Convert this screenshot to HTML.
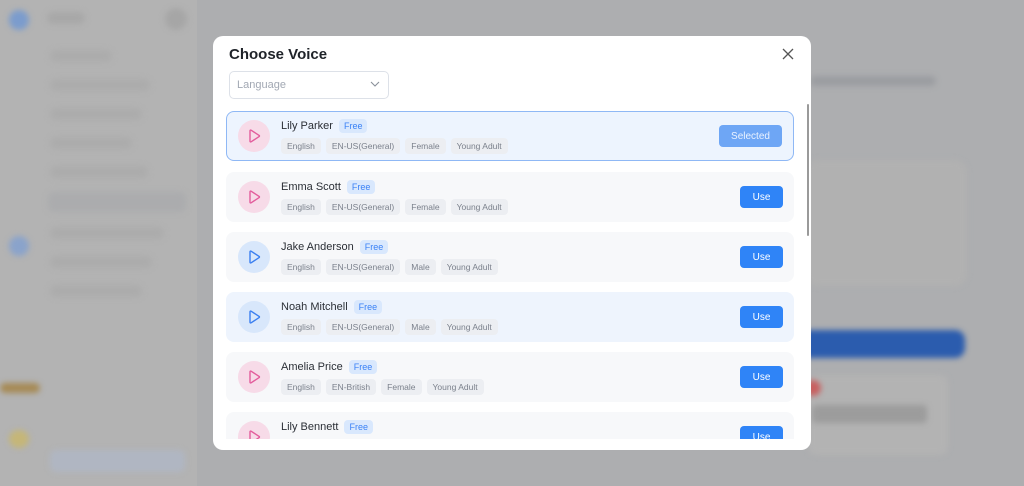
<!DOCTYPE html>
<html><head><meta charset="utf-8"><style>
*{box-sizing:border-box;margin:0;padding:0}
body{width:1024px;height:486px;overflow:hidden;background:#adaeb0;font-family:"Liberation Sans",sans-serif;position:relative}
.bg{position:absolute;filter:blur(3px)}
.modal{position:absolute;left:213px;top:36px;width:598px;height:414px;background:#fff;border-radius:10px;overflow:hidden}
h1{position:absolute;left:16px;top:10px;font-size:15px;font-weight:bold;color:#1f2329}
.close{position:absolute;left:568px;top:11px}
.sel{position:absolute;left:16px;top:35px;width:160px;height:28px;border:1px solid #dde1e8;border-radius:5px;font-size:11px;color:#a2a8b3;padding:7px 7px}
.sel svg{position:absolute;right:8px;top:9px}
.list{position:absolute;left:13px;top:75px;width:568px;height:328px;overflow:hidden}
.row{position:absolute;left:0;width:568px;height:50px;border-radius:8px;background:#f7f8fa}
.row.s{background:#edf4fe;border:1px solid #8fb8f5}
.row.b{background:#eef4fd}
.av{position:absolute;left:12px;top:9px;width:32px;height:32px;border-radius:50%;background:#f7dbe8}
.av.bl{background:#d8e7fb}
.av svg{position:absolute;left:10px;top:9px}
.nm{position:absolute;left:55px;top:8px;font-size:11px;color:#2b2f36;display:flex;align-items:center}
.free{margin-left:6px;background:#d9e8fd;color:#3b82f6;font-size:9px;padding:2px 5px;border-radius:4px}
.tags{position:absolute;left:55px;top:27px;display:flex;gap:5px}
.tags span{background:#eceef2;color:#7b818c;font-size:8.5px;padding:0 6px;border-radius:4px;height:16px;line-height:16px}
.btn{position:absolute;right:11px;top:14px;width:43px;height:22px;background:#2f84f7;color:#fff;font-size:10px;border-radius:4px;display:flex;align-items:center;justify-content:center}
.btn.sd{width:63px;background:#6ea6f5;color:#eaf2ff;top:13px}
.sb{position:absolute;left:594px;top:68px;width:2px;height:132px;background:#9a9a9a;border-radius:1px}
</style></head><body>
<div style="position:absolute;left:0;top:0;width:197px;height:486px;background:#b3b3b3"></div>
<div class="bg" style="left:9px;top:10px;width:20px;height:20px;border-radius:50%;background:#7b9ccd"></div>
<div class="bg" style="left:47px;top:12px;width:38px;height:12px;border-radius:6px;background:#a8a8a8"></div>
<div class="bg" style="left:165px;top:8px;width:22px;height:22px;border-radius:50%;background:#a6a6a6"></div>
<div class="bg" style="left:9px;top:236px;width:20px;height:20px;border-radius:50%;background:#8aa3cb"></div>
<div class="bg" style="left:0;top:383px;width:40px;height:10px;border-radius:5px;background:#a68a55"></div>
<div class="bg" style="left:9px;top:430px;width:20px;height:18px;border-radius:50%;background:#c5b678"></div>
<div class="bg" style="left:50px;top:450px;width:135px;height:22px;border-radius:6px;background:#b0b6c2"></div>
<div class="bg" style="left:50px;top:50px;width:62px;height:12px;border-radius:6px;background:#acacac"></div>
<div class="bg" style="left:50px;top:79px;width:100px;height:12px;border-radius:6px;background:#acacac"></div>
<div class="bg" style="left:50px;top:108px;width:92px;height:12px;border-radius:6px;background:#acacac"></div>
<div class="bg" style="left:50px;top:137px;width:82px;height:12px;border-radius:6px;background:#acacac"></div>
<div class="bg" style="left:50px;top:166px;width:98px;height:12px;border-radius:6px;background:#acacac"></div>
<div class="bg" style="left:48px;top:192px;width:138px;height:20px;border-radius:6px;background:#abacae"></div>
<div class="bg" style="left:50px;top:227px;width:114px;height:12px;border-radius:6px;background:#acacac"></div>
<div class="bg" style="left:50px;top:256px;width:102px;height:12px;border-radius:6px;background:#acacac"></div>
<div class="bg" style="left:50px;top:285px;width:92px;height:12px;border-radius:6px;background:#acacac"></div>
<div class="bg" style="left:810px;top:76px;width:126px;height:10px;border-radius:5px;background:#9b9da1"></div>
<div class="bg" style="left:805px;top:160px;width:162px;height:126px;border-radius:12px;background:#b1b1b1"></div>
<div class="bg" style="left:800px;top:330px;width:165px;height:28px;border-radius:10px;background:#2b5cae"></div>
<div class="bg" style="left:808px;top:375px;width:140px;height:80px;border-radius:8px;background:#b3b3b3"></div>
<div class="bg" style="left:805px;top:380px;width:16px;height:16px;border-radius:50%;background:#c86060"></div>
<div class="bg" style="left:812px;top:405px;width:115px;height:18px;border-radius:4px;background:#9c9c9c"></div>
<div class="modal">
<h1>Choose Voice</h1>
<svg class="close" width="14" height="14" viewBox="0 0 14 14"><path d="M2 2L12 12M12 2L2 12" stroke="#555" stroke-width="1.3"/></svg>
<div class="sel">Language<svg width="10" height="6" viewBox="0 0 10 6"><path d="M1 1l4 4 4-4" stroke="#8a909a" stroke-width="1.1" fill="none"/></svg></div>
<div class="list">
<div class="row s" style="top:0">
<div class="av" style="left:11px;top:8px"><svg width="13" height="14" viewBox="0 0 13 14"><path d="M2 1.8v10.4c0 .6.6.9 1.1.6l8-5.2c.5-.3.5-.9 0-1.2l-8-5.2C2.6.9 2 1.2 2 1.8z" fill="none" stroke="#e35d9c" stroke-width="1.4"/></svg></div>
<div class="nm" style="top:7px;left:54px">Lily Parker<span class="free">Free</span></div>
<div class="tags" style="top:26px;left:54px"><span>English</span><span>EN-US(General)</span><span>Female</span><span>Young Adult</span></div>
<div class="btn sd">Selected</div></div>
<div class="row" style="top:61px">
<div class="av"><svg width="13" height="14" viewBox="0 0 13 14"><path d="M2 1.8v10.4c0 .6.6.9 1.1.6l8-5.2c.5-.3.5-.9 0-1.2l-8-5.2C2.6.9 2 1.2 2 1.8z" fill="none" stroke="#e35d9c" stroke-width="1.4"/></svg></div>
<div class="nm">Emma Scott<span class="free">Free</span></div>
<div class="tags"><span>English</span><span>EN-US(General)</span><span>Female</span><span>Young Adult</span></div>
<div class="btn">Use</div></div>
<div class="row" style="top:121px">
<div class="av bl"><svg width="13" height="14" viewBox="0 0 13 14"><path d="M2 1.8v10.4c0 .6.6.9 1.1.6l8-5.2c.5-.3.5-.9 0-1.2l-8-5.2C2.6.9 2 1.2 2 1.8z" fill="none" stroke="#3b7ff0" stroke-width="1.4"/></svg></div>
<div class="nm">Jake Anderson<span class="free">Free</span></div>
<div class="tags"><span>English</span><span>EN-US(General)</span><span>Male</span><span>Young Adult</span></div>
<div class="btn">Use</div></div>
<div class="row b" style="top:181px">
<div class="av bl"><svg width="13" height="14" viewBox="0 0 13 14"><path d="M2 1.8v10.4c0 .6.6.9 1.1.6l8-5.2c.5-.3.5-.9 0-1.2l-8-5.2C2.6.9 2 1.2 2 1.8z" fill="none" stroke="#3b7ff0" stroke-width="1.4"/></svg></div>
<div class="nm">Noah Mitchell<span class="free">Free</span></div>
<div class="tags"><span>English</span><span>EN-US(General)</span><span>Male</span><span>Young Adult</span></div>
<div class="btn">Use</div></div>
<div class="row" style="top:241px">
<div class="av"><svg width="13" height="14" viewBox="0 0 13 14"><path d="M2 1.8v10.4c0 .6.6.9 1.1.6l8-5.2c.5-.3.5-.9 0-1.2l-8-5.2C2.6.9 2 1.2 2 1.8z" fill="none" stroke="#e35d9c" stroke-width="1.4"/></svg></div>
<div class="nm">Amelia Price<span class="free">Free</span></div>
<div class="tags"><span>English</span><span>EN-British</span><span>Female</span><span>Young Adult</span></div>
<div class="btn">Use</div></div>
<div class="row" style="top:301px">
<div class="av"><svg width="13" height="14" viewBox="0 0 13 14"><path d="M2 1.8v10.4c0 .6.6.9 1.1.6l8-5.2c.5-.3.5-.9 0-1.2l-8-5.2C2.6.9 2 1.2 2 1.8z" fill="none" stroke="#e35d9c" stroke-width="1.4"/></svg></div>
<div class="nm">Lily Bennett<span class="free">Free</span></div>
<div class="btn">Use</div></div>
</div>
<div class="sb"></div>
</div>
</body></html>
